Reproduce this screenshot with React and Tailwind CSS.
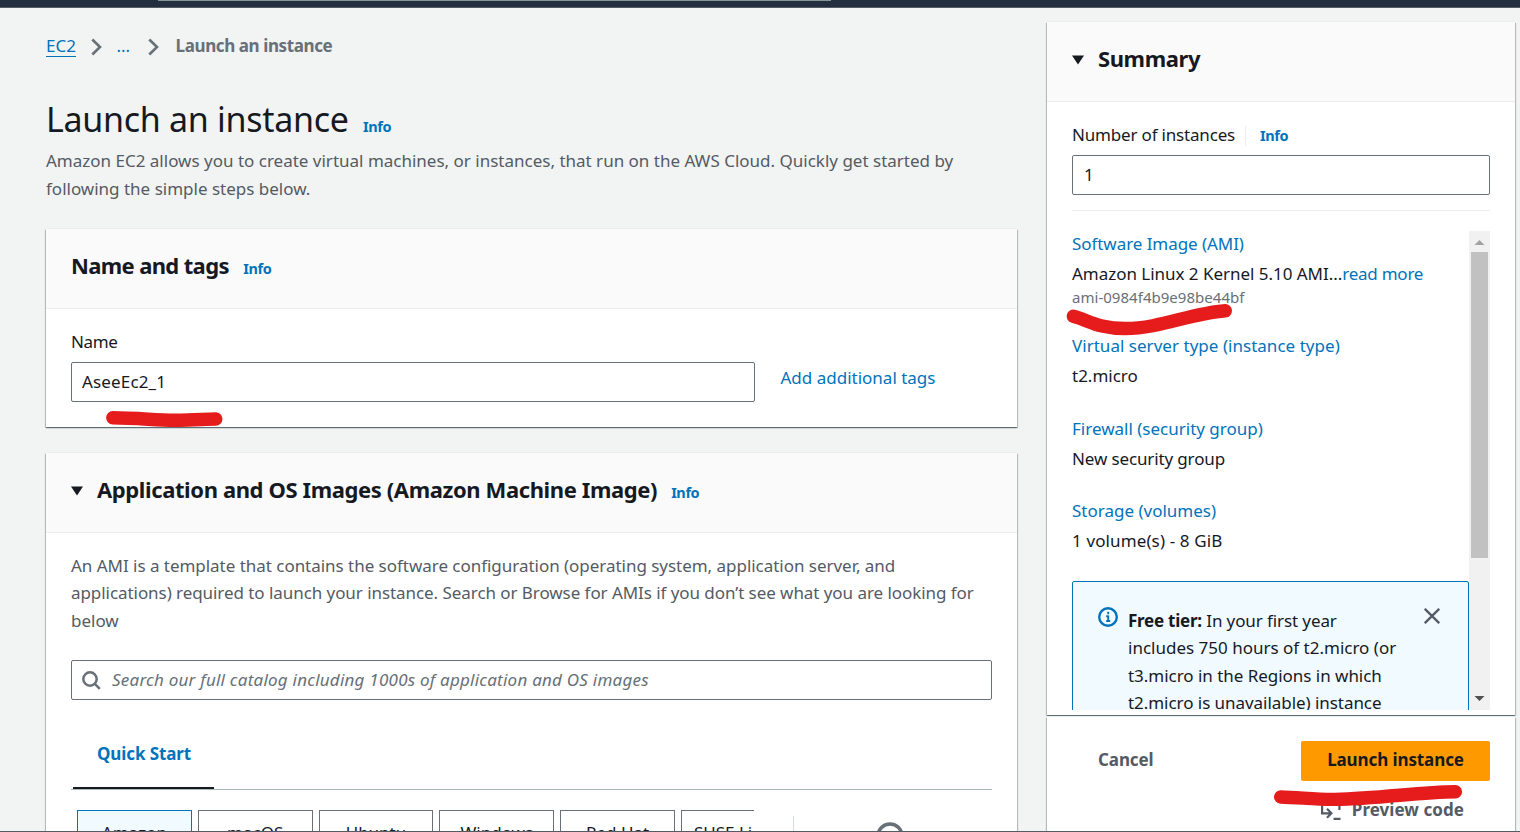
const CARD =
  "bg-white shadow-[0_1px_1px_0_rgba(0,28,36,0.4),1px_1px_1px_0_rgba(0,28,36,0.2),-1px_1px_1px_0_rgba(0,28,36,0.2),0_-1px_0_0_#eaeded]";

function Info({ className = "" }) {
  return (
    <a className={`text-[14.5px] font-bold tracking-[-0.4px] text-[#0073bb] ${className}`}>Info</a>
  );
}

function Triangle() {
  return (
    <svg width="12" height="10" viewBox="0 0 12 10" className="mt-[2px] mr-[14px] shrink-0">
      <path d="M0 0.5h12L6 9.5z" fill="#16191f" />
    </svg>
  );
}

function CardHeader({ children }) {
  return (
    <div className="h-20 border-b border-[#eaeded] bg-[#fafafa] px-[25px] pb-[6px]">
      <div className="flex h-[73px] items-center whitespace-nowrap">{children}</div>
    </div>
  );
}

function Chevron() {
  return (
    <svg width="11" height="18" viewBox="0 0 11 18" fill="none" stroke="#687078" strokeWidth="2.6">
      <path d="M1.3 1.5L9 9l-7.7 7.5" />
    </svg>
  );
}

const TILES = ["Amazon", "macOS", "Ubuntu", "Windows", "Red Hat", "SUSE Li"];

function Tile({ label, active, last }) {
  return (
    <div
      className={`h-24 w-[114.8px] shrink-0 border pt-[9px] leading-[25px] whitespace-nowrap ${
        active ? "border-[#0073bb] bg-[#f1faff]" : "border-[#687078] bg-white"
      } ${last ? "pl-[12px]" : "text-center"}`}
    >
      {label}
    </div>
  );
}

function SummaryItem({ title, children, className = "" }) {
  return (
    <div className={`leading-[25px] ${className}`}>
      <div className="text-[#0073bb]">{title}</div>
      <div className="mt-[5px]">{children}</div>
    </div>
  );
}

export default function App() {
  return (
    <div className="relative flex h-[832px] w-[1520px] flex-col overflow-hidden bg-[#f2f3f3] font-['Noto_Sans','Open_Sans',sans-serif] text-[17px] text-[#16191f]">
      <div className="h-2 shrink-0 border-b border-[#545b64] bg-[#232f3e]">
        <div className="ml-[158px] h-px w-[673px] bg-[#879596]" />
      </div>

      <div className="flex min-h-0 flex-1">
        <main className="ml-[46px] w-[971px] shrink-0 pt-6">
          <nav className="flex h-[27px] items-center leading-[27px]">
            <a className="border-b border-[#0073bb] leading-[21px] text-[#0073bb]">EC2</a>
            <span className="ml-[15px] mt-[3px]"><Chevron /></span>
            <span className="ml-[14.5px] text-[#0073bb]">...</span>
            <span className="ml-[17.5px] mt-[3px]"><Chevron /></span>
            <span className="ml-[17px] font-bold tracking-[-0.4px] text-[#687078]">Launch an instance</span>
          </nav>

          <div className="mt-[38px] flex h-11 items-baseline leading-[44px]">
            <h1 className="text-[34px] tracking-[-0.3px]">Launch an instance</h1>
            <Info className="ml-[14.5px]" />
          </div>
          <p className="mt-[6px] leading-[27.5px] text-[#545b64]">
            Amazon EC2 allows you to create virtual machines, or instances, that run on the AWS Cloud. Quickly get started by
            <br />
            following the simple steps below.
          </p>

          <section className={`mt-[27px] ${CARD}`}>
            <CardHeader>
              <div className="flex items-baseline">
                <h2 className="text-[22px] font-bold tracking-[-0.64px]">Name and tags</h2>
                <Info className="ml-[14.5px]" />
              </div>
            </CardHeader>
            <div className="px-[25px] pt-[19px] pb-[25px]">
              <div className="leading-[27px] tracking-[-0.4px]">Name</div>
              <div className="mt-[7px] flex">
                <div className="h-10 w-[684px] rounded-[2px] border border-[#687078] pl-[10px] leading-[38px] tracking-[0.15px]">AseeEc2_1</div>
                <a className="ml-[25.5px] leading-[31px] text-[#0073bb]">Add additional tags</a>
              </div>
            </div>
          </section>

          <section className={`mt-[26px] h-[400px] ${CARD}`}>
            <CardHeader>
              <Triangle />
              <div className="flex items-baseline">
                <h2 className="text-[22px] font-bold tracking-[-0.39px]">Application and OS Images (Amazon Machine Image)</h2>
                <Info className="ml-[14px]" />
              </div>
            </CardHeader>
            <div className="px-[25px] pt-[18.6px]">
              <p className="leading-[27.5px] whitespace-nowrap text-[#545b64]">
                <span className="tracking-[-0.03px]">An AMI is a template that contains the software configuration (operating system, application server, and</span>
                <br />
                <span className="tracking-[-0.06px]">applications) required to launch your instance. Search or Browse for AMIs if you don’t see what you are looking for</span>
                <br />
                below
              </p>
              <div className="mt-[25.9px] flex h-10 items-center rounded-[2px] border border-[#687078] pl-[10px]">
                <svg className="mt-px" width="19" height="19" viewBox="0 0 19 19" fill="none" stroke="#687078" strokeWidth="2.5">
                  <circle cx="8" cy="8" r="6.7" />
                  <path d="M12.8 12.8l5 5" />
                </svg>
                <span className="ml-[11px] tracking-[0.23px] text-[#687078] italic">
                  Search our full catalog including 1000s of application and OS images
                </span>
              </div>
              <div className="mt-[30px] flex h-[60px] border-b border-[#aab7b8] pl-[2px]">
                <div className="h-[59px] w-[141px] border-b-2 border-[#16191f] pl-6 leading-[47px] font-bold tracking-[-0.1px] text-[#0073bb]">
                  Quick Start
                </div>
              </div>
              <div className="mt-5 flex pl-[6px]">
                <div className="flex w-[677px] gap-[6px] overflow-hidden">
                  {TILES.map((t, i) => (
                    <Tile key={t} label={t} active={i === 0} last={i === 5} />
                  ))}
                </div>
                <div className="mt-[6px] ml-[39px] h-20 w-px bg-[#d5dbdb]" />
                <svg className="mt-3 ml-[82px]" width="28" height="28" viewBox="0 0 28 28" fill="none" stroke="#687078" strokeWidth="3.6">
                  <circle cx="14" cy="14" r="12" />
                </svg>
              </div>
            </div>
          </section>
        </main>

        <aside className="mt-[14px] ml-[30px] w-[468px] shrink-0">
          <section className={CARD}>
            <CardHeader>
              <Triangle />
              <h2 className="text-[22px] font-bold tracking-[-0.4px]">Summary</h2>
            </CardHeader>
            <div className="px-[25px] pt-[19px] pb-[5px]">
              <div className="flex h-[27px] items-center">
                <span className="tracking-[-0.18px]">Number of instances</span>
                <span className="mt-[2px] ml-[10px] h-5 w-px bg-[#eaeded]" />
                <Info className="mt-[2px] ml-[14px]" />
              </div>
              <div className="mt-[7px] h-10 rounded-[2px] border border-[#687078] pl-[11px] leading-[38px]">1</div>
              <div className="mt-[15px] h-px bg-[#eaeded]" />
              <div className="mt-5 flex h-[479px] overflow-hidden">
                <div className="w-[397px]">
                  <SummaryItem title={<span className="tracking-[-0.06px]">Software Image (AMI)</span>}>
                    <span className="tracking-[-0.03px]">Amazon Linux 2 Kernel 5.10 AMI...</span>
                    <span className="tracking-[-0.25px] text-[#0073bb]">read more</span>
                    <div className="text-[15px] leading-[22px] tracking-[0.03px] text-[#687078]">ami-0984f4b9e98be44bf</div>
                  </SummaryItem>
                  <SummaryItem
                    title={<span className="tracking-[0.03px]">Virtual server type (instance type)</span>}
                    className="mt-[25px]"
                  >
                    t2.micro
                  </SummaryItem>
                  <SummaryItem title="Firewall (security group)" className="mt-[28px]">
                    <span className="tracking-[-0.13px]">New security group</span>
                  </SummaryItem>
                  <SummaryItem title="Storage (volumes)" className="mt-[27px]">
                    <span className="tracking-[0.12px]">1 volume(s) - 8 GiB</span>
                  </SummaryItem>
                  <div className="mt-[28px] flex h-60 rounded-[2px] border border-[#0073bb] bg-[#f1faff] pt-[25px] pl-[25px]">
                    <svg width="20" height="20" viewBox="0 0 20 20" fill="none" stroke="#0073bb" strokeWidth="2.4">
                      <circle cx="10" cy="10" r="8.8" />
                      <path d="M10.2 4.8v2.4M10.2 8.6v6M8.2 9.2h2M8.2 14h4" strokeWidth="1.9" />
                    </svg>
                    <p className="mt-[-0.25px] ml-[10px] w-[296px] leading-[27.5px] whitespace-nowrap">
                      <b className="tracking-[-0.25px]">Free tier:</b> <span className="tracking-[-0.1px]">In your first year</span>
                      <br />
                      includes 750 hours of t2.micro (or
                      <br />
                      <span className="tracking-[-0.03px]">t3.micro in the Regions in which</span>
                      <br />
                      <span className="tracking-[-0.05px]">t2.micro is unavailable) instance</span>
                    </p>
                    <svg width="16" height="16" viewBox="0 0 16 16" stroke="#545b64" strokeWidth="2.3" className="mt-px">
                      <path d="M0.8 0.8l14.4 14.4M15.2 0.8L0.8 15.2" />
                    </svg>
                  </div>
                </div>
                <div className="flex w-[21px] flex-col items-center bg-[#f1f1f1]">
                  <svg width="21" height="21" viewBox="0 0 21 21"><path d="M5.5 14h10l-5-5z" fill="#a3a3a3" /></svg>
                  <div className="h-[306px] w-[17px] bg-[#c1c1c1]" />
                  <svg className="mt-auto" width="21" height="21" viewBox="0 0 21 21"><path d="M5.5 7h10l-5 5z" fill="#505050" /></svg>
                </div>
              </div>
            </div>
          </section>

          <section className={`mt-[2px] h-40 px-[25px] pt-6 font-bold text-[#545b64] ${CARD}`}>
            <div className="flex h-10 items-center justify-between pl-[26px]">
              <span className="pb-[3px] tracking-[-0.1px]">Cancel</span>
              <button className="h-10 w-[189px] rounded-[2px] bg-[#ff9900] pb-[3px] text-center tracking-[-0.1px] text-[#16191f]">
                Launch instance
              </button>
            </div>
            <div className="mt-[15px] flex items-center justify-end pr-[26px] leading-[27px]">
              <svg className="mr-[11px]" width="20" height="20" viewBox="0 0 20 20" fill="none" stroke="#545b64" strokeWidth="2.2">
                <path d="M1.1 1v12.3h9M6 8.8l4.4 4.5L6 17.8M12.5 18.9h7M18.4 5v5M12 5h3" />
              </svg>
              <span className="tracking-[0.06px]">Preview code</span>
            </div>
          </section>
        </aside>
      </div>

      <svg className="pointer-events-none absolute inset-0" width="1520" height="832" viewBox="0 0 1520 832" fill="none" stroke="#e61c1c" strokeWidth="13.4" strokeLinecap="round">
        <path d="M112.8 417.8C140 418 155 420.3 175 420.3S205 419 215.8 419" />
        <path d="M1073.3 316.3C1088 320 1098 328.5 1125 328.5C1160 328.5 1190 313.5 1225.3 310.8" />
        <path d="M1280.6 797C1300 797.5 1315 799.6 1335 799.4C1380 798.5 1420 792 1455.4 791.8" />
      </svg>
      <div className="absolute bottom-0 left-0 h-px w-full bg-[#545b64]" />
    </div>
  );
}
